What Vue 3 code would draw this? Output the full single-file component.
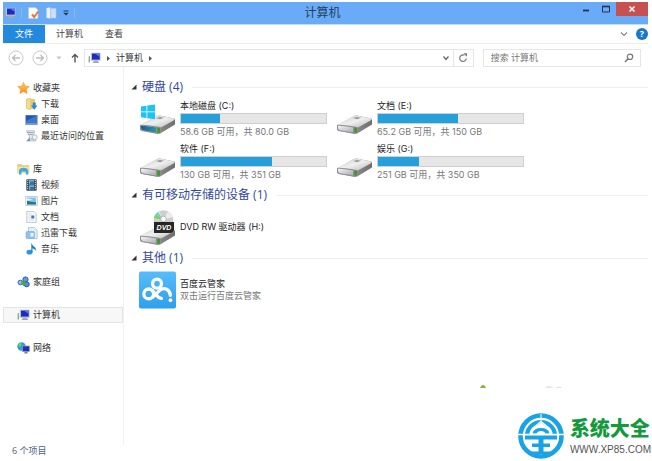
<script setup>
import { ref } from 'vue'

const query = ref('')

const groups = [
  {
    head: { icon: 'star', label: '收藏夹' },
    items: [
      { icon: 'download', label: '下载' },
      { icon: 'desktop', label: '桌面' },
      { icon: 'recent', label: '最近访问的位置' },
    ],
  },
  {
    head: { icon: 'library', label: '库' },
    items: [
      { icon: 'video', label: '视频' },
      { icon: 'picture', label: '图片' },
      { icon: 'document', label: '文档' },
      { icon: 'thunder', label: '迅雷下载' },
      { icon: 'music', label: '音乐' },
    ],
  },
  { head: { icon: 'homegroup', label: '家庭组' }, items: [] },
  { head: { icon: 'pc', label: '计算机', active: true }, items: [] },
  { head: { icon: 'network', label: '网络' }, items: [] },
]

const drives = [
  { name: '本地磁盘 (C:)', used: 27, info: '58.6 GB 可用，共 80.0 GB', icon: 'drive-win' },
  { name: '文档 (E:)', used: 55, info: '65.2 GB 可用，共 150 GB', icon: 'drive' },
  { name: '软件 (F:)', used: 63, info: '130 GB 可用，共 351 GB', icon: 'drive' },
  { name: '娱乐 (G:)', used: 28, info: '251 GB 可用，共 350 GB', icon: 'drive' },
]
</script>

<template>
  <div class="window">
    <svg class="sprite" aria-hidden="true">
      <defs>
        <linearGradient id="g-top" x1="0" y1="0" x2="1" y2="1">
          <stop offset="0" stop-color="#c9c9c9" />
          <stop offset=".5" stop-color="#efefef" />
          <stop offset="1" stop-color="#b5b5b5" />
        </linearGradient>
        <linearGradient id="g-side" x1="0" y1="0" x2="1" y2="0">
          <stop offset="0" stop-color="#a8a8a8" />
          <stop offset="1" stop-color="#6e6e6e" />
        </linearGradient>
        <linearGradient id="g-front" x1="0" y1="0" x2="1" y2="1">
          <stop offset="0" stop-color="#f4f4f8" />
          <stop offset="1" stop-color="#a9a9ae" />
        </linearGradient>
        <linearGradient id="g-blue" x1="0" y1="0" x2="1" y2="0">
          <stop offset="0" stop-color="#1d5c92" />
          <stop offset="1" stop-color="#2d94a8" />
        </linearGradient>
        <linearGradient id="g-cloud" x1="0" y1="0" x2="0" y2="1">
          <stop offset="0" stop-color="#54bdfb" />
          <stop offset="1" stop-color="#2f9fee" />
        </linearGradient>
        <linearGradient id="g-star" x1="0" y1="0" x2="0" y2="1">
          <stop offset="0" stop-color="#ffd05a" />
          <stop offset="1" stop-color="#f58a1f" />
        </linearGradient>
      </defs>
      <symbol id="drivebox" viewBox="0 0 37 20">
        <path d="M1 11 18 1.500Q20 .8 22 1.200L35 4Q36.500 4.500 36 6V10L22 18.500Q20 19.500 17 19L3 16.500Q1 16 1 14Z" fill="url(#g-side)" />
        <path d="M1 10.500 18 1.500Q20 .8 22 1.200L35 4Q36.500 4.700 35 5.800L22 13 3 11Z" fill="url(#g-top)" />
        <path d="M17 3.500 21 2.500 25 3.300 21 4.800Z" fill="#999" />
        <path d="M1 10.500Q3 9.500 21 12.500Q22.500 13 22 18.500Q20 19.500 17 19L3 16.500Q1 16 1 14Z" fill="#8f8f91" />
        <path d="M2 11.300Q5 10.800 17 13V18L4 15.700Q2 15 2 13.500Z" fill="url(#g-front)" />
        <path d="M18.300 13 21 13.400V18.300H18.300Z" fill="#3f982d" />
      </symbol>
      <symbol id="drive" viewBox="0 0 37 37">
        <use href="#drivebox" y="14" width="37" height="20" />
      </symbol>
      <symbol id="drive-win" viewBox="0 0 37 37">
        <use href="#drivebox" y="14" width="37" height="20" />
        <path d="M2 25.300Q5 24.800 17 27V32L4 29.700Q2 29 2 27.500Z" fill="url(#g-blue)" />
        <path d="M2 6 7.500 5.200V11H2ZM8.300 5.100 16 4V11H8.300ZM2 11.800H7.500V17.500L2 16.700ZM8.300 11.800H16V18.800L8.300 17.700Z" fill="#1cc3f7" />
      </symbol>
      <symbol id="cloud" viewBox="0 0 38 38">
        <rect width="38" height="38" rx="2" fill="url(#g-cloud)" />
        <g fill="none" stroke="#fff" stroke-width="3.400" stroke-linecap="round">
          <circle cx="18.500" cy="12.500" r="4.600" />
          <circle cx="10" cy="23" r="5" />
          <path d="M13.500 26.500Q17 24 20 20.500Q24 16 29 18.500Q32 20.500 32.200 24.500" />
          <path d="M13.500 19.500 19 25.500Q20.500 27.300 23 27.500" />
        </g>
        <circle cx="32.300" cy="29.500" r="1.900" fill="#fff" />
      </symbol>
      <symbol id="star" viewBox="0 0 12 12">
        <path d="M6 .3 7.700 4 11.800 4.500 8.800 7.400 9.600 11.600 6 9.600 2.300 11.600 3.100 7.400.2 4.500 4.300 4Z" fill="url(#g-star)" stroke="#f0932b" stroke-width=".5" />
      </symbol>
      <symbol id="download" viewBox="0 0 12 12">
        <path d="M1 1 5 .3V11.500L1 10.800Z" fill="#f3dc8a" stroke="#c9ac55" stroke-width=".5" />
        <path d="M5 1H9.500V11H5Z" fill="#e8cb6c" />
        <path d="M7.300 4.500H10.200V7.500H12L8.800 11.700 5.500 7.500H7.300Z" fill="#2b8bd8" />
      </symbol>
      <symbol id="desktop" viewBox="0 0 12 12">
        <rect x=".3" y="1.300" width="11.400" height="9.400" fill="#3c78d0" stroke="#6b86ad" stroke-width=".6" />
        <path d="M.6 1.600H11.400L.6 7Z" fill="#2457b4" />
        <rect x=".6" y="9.300" width="10.800" height="1.200" fill="#8fa7c5" />
      </symbol>
      <symbol id="recent" viewBox="0 0 12 12">
        <path d="M1 .8H9L8.200 6.500 10.500 11H3.500L3.800 6Z" fill="#e1e7ec" stroke="#9daab5" stroke-width=".6" />
        <path d="M1.500 2.500H8M3 4.500H7.500M5 9H10" stroke="#84919c" stroke-width=".7" />
        <circle cx="9.300" cy="7.300" r="2.400" fill="#eef5fa" stroke="#93a3b0" stroke-width=".6" />
        <path d="M.5 11.200 4.500 7.500V11.200Z" fill="#7397b8" />
      </symbol>
      <symbol id="library" viewBox="0 0 13 12">
        <path d="M.5 1.500H4.500L5.500 2.500H12V10H.5Z" fill="#e4cf79" stroke="#cfb765" stroke-width=".4" />
        <path d="M.5 3.800H12.300V10.200H.5Z" fill="#f4e5a3" />
        <path d="M2 11.500V7.500Q2.500 4.800 6.500 4.800T11.300 7.500V11.500H8.800V8.800H4.500V11.500Z" fill="#46a8df" />
      </symbol>
      <symbol id="video" viewBox="0 0 12 12">
        <rect x=".8" y=".2" width="10.400" height="11.600" rx=".8" fill="#464c54" />
        <path d="M3.500 1H8.500V5.600H3.500ZM3.500 6.300H8.500V11H3.500Z" fill="#62b4de" />
        <path d="M5 2.500H8.500V5.600H4ZM5 8H8.500V11H4Z" fill="#3a6f9c" />
        <path d="M2.100 1V11M9.900 1V11" stroke="#cbd0d5" stroke-width="1" stroke-dasharray="1 1" />
      </symbol>
      <symbol id="picture" viewBox="0 0 12 12">
        <rect x=".3" y="1.300" width="11.400" height="9.400" fill="#f4f6f8" stroke="#aab3bb" stroke-width=".6" />
        <rect x="1.500" y="2.500" width="9" height="7" fill="#7dc6ea" />
        <path d="M1.500 5.500 5 6.800 10.500 7.300V9.500H1.500Z" fill="#27748b" />
        <path d="M1.500 3.500Q5 3 7 5L1.500 5.700Z" fill="#e8f5fb" />
      </symbol>
      <symbol id="document" viewBox="0 0 12 12">
        <path d="M1.300.4H8.300L10.700 2.800V11.600H1.300Z" fill="#f7f9fa" stroke="#a8b2ba" stroke-width=".7" />
        <path d="M3 3H6M3 5H5M3 7H5M3 9H8" stroke="#c3cdd5" stroke-width=".7" />
        <rect x="5.800" y="4.500" width="3" height="3" fill="#387fae" />
      </symbol>
      <symbol id="thunder" viewBox="0 0 12 12">
        <path d="M3 .4H9L11.600 3V11.500H3Z" fill="#e0eefa" stroke="#9bb8d2" stroke-width=".7" />
        <rect x=".5" y="4.500" width="8.500" height="7" rx="1" fill="#8fc1ec" stroke="#6fa5d5" stroke-width=".5" />
        <path d="M5 6H8V9.500H5Z" fill="#edf6fd" />
      </symbol>
      <symbol id="music" viewBox="0 0 12 12">
        <ellipse cx="4" cy="9.200" rx="3" ry="2.400" fill="#2d96dd" />
        <path d="M6 .3Q7 3 9.500 4.200Q11 5.500 10 8Q9.500 5.600 7 5.200V9.200H5.800V.3Z" fill="#1f7dc6" />
      </symbol>
      <symbol id="homegroup" viewBox="0 0 13 12">
        <circle cx="8.500" cy="3.500" r="2.600" fill="#6697df" stroke="#2b59b5" stroke-width="1" />
        <circle cx="3.300" cy="6.500" r="2.300" fill="#8db9e8" stroke="#3b69bd" stroke-width="1" />
        <circle cx="9.700" cy="8.300" r="2.500" fill="#5f8fd8" stroke="#234fae" stroke-width="1" />
        <path d="M4.500 4.500 8 4.800 9 8 6.500 10 4.500 8Z" fill="#3daa4c" />
      </symbol>
      <symbol id="pc" viewBox="0 0 13 12">
        <path d="M.6 4.500 2 4V10.500H.6Z" fill="#86ad8d" />
        <rect x="2.800" y=".8" width="9.700" height="8" fill="#b9c0d0" />
        <rect x="4" y="1.600" width="7.700" height="6" fill="#1d2bc4" />
        <path d="M7 1.600H11.700V5Z" fill="#5c7eea" />
        <path d="M6 8.800H9.500L11.500 11H4.500Z" fill="#a4a9b1" />
      </symbol>
      <symbol id="network" viewBox="0 0 13 12">
        <circle cx="4.500" cy="4.500" r="4.200" fill="#2e9bd8" />
        <path d="M1.500 2Q4 0 5 2Q4 4.500 2 5.500ZM4 6.500 7 5.500 6 8.500Z" fill="#6cd06a" />
        <rect x="5.500" y="4" width="7" height="5.500" fill="#1f2fb8" stroke="#8fa2c8" stroke-width=".7" />
        <path d="M8 9.500H10L11 11.500H7Z" fill="#76829c" />
      </symbol>
    </svg>

    <header class="titlebar">
      <div class="quick">
        <svg class="ico"><use href="#pc" /></svg>
        <i class="sep"></i>
        <button type="button" aria-label="属性">
          <svg class="ico" viewBox="0 0 12 12">
            <path d="M1 .5H8L10.500 3V11.500H1Z" fill="#fbfbfb" stroke="#b9c2cc" stroke-width=".5" />
            <path d="M4.500 7.500 6.700 10 10.700 4.500" fill="none" stroke="#e8743a" stroke-width="2" />
          </svg>
        </button>
        <button type="button" aria-label="新建文件夹">
          <svg class="ico" viewBox="0 0 12 12">
            <path d="M1 1 5 .5V11.500L1 11Z" fill="#e9f2fb" />
            <path d="M5.500 1.500H10.500V11H5.500Z" fill="#cfe0f1" stroke="#b0c8e2" stroke-width=".5" />
          </svg>
        </button>
        <button type="button" aria-label="自定义快速访问工具栏">
          <svg class="mini" viewBox="0 0 6 6"><path d="M.5 1H5.500" stroke="#223a55" /><path d="M.3 2.700H5.700L3 5.500Z" fill="#223a55" /></svg>
        </button>
        <i class="sep"></i>
      </div>
      <h1>计算机</h1>
      <div class="controls">
        <button type="button" aria-label="最小化">
          <svg viewBox="0 0 10 10"><path d="M2 6.500H8" stroke="#1f344e" stroke-width="1.800" /></svg>
        </button>
        <button type="button" aria-label="最大化">
          <svg viewBox="0 0 10 10"><path d="M1.500 2.500H8.500V8H1.500Z" fill="none" stroke="#1f344e" /><path d="M1 2.500H9" stroke="#1f344e" stroke-width="1.600" /></svg>
        </button>
        <button type="button" class="close" aria-label="关闭">
          <svg viewBox="0 0 10 10"><path d="M2.500 2.500 7.500 7.500M7.500 2.500 2.500 7.500" stroke="#fff" stroke-width="1.500" /></svg>
        </button>
      </div>
    </header>

    <nav class="ribbon">
      <button type="button" class="file">文件</button>
      <button type="button" class="tab">计算机</button>
      <button type="button" class="tab">查看</button>
      <span class="grow"></span>
      <button type="button" aria-label="展开功能区">
        <svg class="chev" viewBox="0 0 8 8"><path d="M1 2.500 4 5.500 7 2.500" fill="none" stroke="#888" stroke-width="1.200" /></svg>
      </button>
      <button type="button" class="help" aria-label="帮助">?</button>
    </nav>

    <div class="addressbar">
      <div class="history">
        <button type="button" aria-label="返回">
          <svg class="round" viewBox="0 0 16 16"><circle cx="8" cy="8" r="7" fill="none" stroke="#c9c9c9" /><path d="M12 8H4.500M7.500 5 4.500 8 7.500 11" fill="none" stroke="#bdbdbd" stroke-width="1.300" /></svg>
        </button>
        <button type="button" aria-label="前进">
          <svg class="round" viewBox="0 0 16 16"><circle cx="8" cy="8" r="7" fill="none" stroke="#c9c9c9" /><path d="M4 8H11.500M8.500 5 11.500 8 8.500 11" fill="none" stroke="#bdbdbd" stroke-width="1.300" /></svg>
        </button>
        <button type="button" aria-label="最近位置">
          <svg class="mini" viewBox="0 0 6 6"><path d="M.5 1.500H5.500L3 4.500Z" fill="#c4c4c4" /></svg>
        </button>
        <button type="button" aria-label="向上">
          <svg class="up" viewBox="0 0 10 10"><path d="M5 9.500V1.500M2 4.500 5 1.500 8 4.500" fill="none" stroke="#555" stroke-width="1.400" /></svg>
        </button>
      </div>
      <div class="path">
        <svg class="ico"><use href="#pc" /></svg>
        <svg class="arrow" viewBox="0 0 5 7"><path d="M1 1 4 3.500 1 6Z" fill="#555" /></svg>
        <a href="#computer">计算机</a>
        <svg class="arrow" viewBox="0 0 5 7"><path d="M1 1 4 3.500 1 6Z" fill="#555" /></svg>
        <span class="grow"></span>
        <button type="button" aria-label="历史记录">
          <svg class="chev" viewBox="0 0 8 8"><path d="M1.500 2.500 4 5.500 6.500 2.500" fill="none" stroke="#666" stroke-width="1.300" /></svg>
        </button>
        <button type="button" class="refresh" aria-label="刷新">
          <svg class="up" viewBox="0 0 10 10"><path d="M8.300 5.500A3.300 3.300 0 1 1 6.500 2.200" fill="none" stroke="#777" stroke-width="1.200" /><path d="M5.500.3H9V3.800Z" fill="#777" /></svg>
        </button>
      </div>
      <label class="search">
        <input v-model="query" type="text" placeholder="搜索 计算机" aria-label="搜索 计算机" />
        <svg class="up" viewBox="0 0 10 10"><circle cx="6" cy="3.800" r="2.700" fill="none" stroke="#777" stroke-width="1.200" /><path d="M4 5.800 1 9" stroke="#777" stroke-width="1.500" /></svg>
      </label>
    </div>

    <div class="body">
      <aside>
        <ul v-for="g in groups" :key="g.head.label">
          <li :class="{ active: g.head.active }">
            <a href="#"><svg class="ico"><use :href="'#' + g.head.icon" /></svg>{{ g.head.label }}</a>
          </li>
          <li v-for="i in g.items" :key="i.label" class="child">
            <a href="#"><svg class="ico"><use :href="'#' + i.icon" /></svg>{{ i.label }}</a>
          </li>
        </ul>
      </aside>

      <main>
        <section>
          <h2><svg viewBox="0 0 6 6"><path d="M5.500.5V5.500H.5Z" fill="#333" /></svg>硬盘 (4)</h2>
          <div class="drives">
            <article v-for="d in drives" :key="d.name" class="item">
              <svg class="big"><use :href="'#' + d.icon" /></svg>
              <div class="text">
                <h3>{{ d.name }}</h3>
                <div class="meter"><div class="fill" :style="{ width: d.used + '%' }"></div></div>
                <p>{{ d.info }}</p>
              </div>
            </article>
          </div>
        </section>
        <section>
          <h2><svg viewBox="0 0 6 6"><path d="M5.500.5V5.500H.5Z" fill="#333" /></svg>有可移动存储的设备 (1)</h2>
          <article class="item single">
            <svg class="big" viewBox="0 0 37 37">
              <use href="#drivebox" y="17" width="37" height="20" />
              <circle cx="24.500" cy="11.500" r="9.800" fill="#cfcfcf" />
              <path d="M24.500 11.500 16 6.500 20 2.700Z" fill="#e9e9e9" />
              <path d="M24.500 11.500 14.900 9.500Q15.500 7 17 5.300Z" fill="#7bd558" />
              <path d="M24.500 11.500 17 5.300 19 3.500Z" fill="#62d0e8" />
              <path d="M24.500 11.500 29 2.700 34 8Z" fill="#eee" />
              <circle cx="24.500" cy="10.500" r="2.800" fill="#fff" stroke="#aaa" stroke-width=".8" />
              <path d="M15 13.500H35V21.500Q34.500 24.500 31 24.500H15Z" fill="#262626" />
              <text class="disc" x="25" y="21.500" text-anchor="middle">DVD</text>
            </svg>
            <h3>DVD RW 驱动器 (H:)</h3>
          </article>
        </section>
        <section>
          <h2><svg viewBox="0 0 6 6"><path d="M5.500.5V5.500H.5Z" fill="#333" /></svg>其他 (1)</h2>
          <article class="item single">
            <svg class="big"><use href="#cloud" /></svg>
            <div class="text">
              <h3>百度云管家</h3>
              <p>双击运行百度云管家</p>
            </div>
          </article>
        </section>
      </main>
    </div>

    <footer>6 个项目</footer>

    <svg class="specks" viewBox="0 0 90 4" aria-hidden="true">
      <path d="M1 4Q2 1 4 1T7 4Z" fill="#86b82c" />
      <path d="M66 4Q67 2 70 2T74 4ZM77 4Q78 2.500 80 2.500T83 4Z" fill="#e3e3e3" />
    </svg>
    <div class="brand">
      <svg viewBox="0 0 46 46" aria-hidden="true">
        <circle cx="23" cy="23" r="20.500" fill="none" stroke="#1aa3e4" stroke-width="4.600" />
        <path d="M23 7A16 16 0 0 0 7 21H12.500Q14 14 19 12.500L23 9.500 27 12.500Q32 14 33.500 21H39A16 16 0 0 0 23 7Z" fill="#1aa3e4" />
        <path d="M23 8.500 29 13.500Q33 16 34 21M23 8.500 17 13.500Q13 16 12 21" fill="none" stroke="#fff" stroke-width="1.500" />
        <path d="M14.500 20.500Q15.500 15 23 15T31.500 20.500H27.500Q26.500 18 23 18T18.500 20.500Z" fill="#1aa3e4" />
        <path d="M0 21.500H46" stroke="#fff" stroke-width="1.500" />
        <path d="M7 22.500H39V26.500H25.500V30.500H32V34H25.500V38.500H34L30 41H16L12 38.500H20.500V34H14V30.500H20.500V26.500H7Z" fill="#1aa3e4" />
        <path d="M23 1V8" stroke="#fff" stroke-width="1" />
      </svg>
      <div>
        <strong>系统大全</strong>
        <span>WWW.XP85.COM</span>
      </div>
    </div>
  </div>
</template>

<style>
body { background: #fff; }
</style>

<style scoped>
.window {
  position: relative;
  box-sizing: border-box;
  min-height: 100vh;
  padding: 2px 4px 0 3px;
  display: flex;
  flex-direction: column;
  font-family: "Open Sans", "Noto Sans CJK SC", sans-serif;
  font-size: 9px;
  line-height: 12px;
  color: #333;
}
.sprite { position: absolute; width: 0; height: 0; }
svg { display: block; flex: none; }
button { border: 0; margin: 0; padding: 0; background: none; font: inherit; color: inherit; display: flex; align-items: center; justify-content: center; }
a { color: inherit; text-decoration: none; }
h1, h2, h3, p, ul { margin: 0; padding: 0; font-weight: normal; font-size: inherit; }
ul { list-style: none; }
.ico { width: 13px; height: 12px; }
.mini { width: 6px; height: 6px; }
.chev { width: 8px; height: 8px; }
.up { width: 10px; height: 10px; }
.grow { flex: 1; }

.titlebar {
  display: grid;
  grid-template-columns: 1fr auto 1fr;
  height: 22px;
  background: #6aabf7;
  border-bottom: 1px solid #c6def8;
}
.quick { display: flex; align-items: center; gap: 5px; }
.sep { width: 1px; height: 10px; background: #8fb5dd; }
.titlebar h1 { padding-right: 6px; font-size: 12px; line-height: 22px; color: #23415f; }
.controls { display: flex; justify-content: flex-end; align-items: flex-start; }
.controls button { width: 20px; height: 14px; }
.controls svg { width: 10px; height: 10px; }
.controls .close { width: 32px; background: #c75050; }

.ribbon { display: flex; height: 18px; border-bottom: 1px solid #ececec; color: #444; }
.ribbon .file { width: 42px; background: #2389dd; color: #fff; }
.ribbon .tab { padding: 0 11px; }
.ribbon .help {
  width: 12px; height: 12px; align-self: center; margin-left: 8px;
  border-radius: 50%; background: #1877cc; color: #fff; font-weight: bold;
}

.addressbar { display: flex; padding: 5px 7px 0 5px; }
.history { display: flex; align-items: center; width: 76px; gap: 8px; }
.round { width: 16px; height: 16px; }
.path, .search { box-sizing: border-box; height: 18px; border: 1px solid #e6e6e6; display: flex; align-items: center; }
.path { flex: 1; padding-left: 3px; gap: 5px; }
.path .arrow { width: 5px; height: 7px; }
.path .refresh { width: 20px; align-self: stretch; border-left: 1px solid #e6e6e6; margin-left: -2px; }
.search { width: 25%; margin-left: 9px; padding: 0 6px 0 7px; }
.search input { flex: 1; min-width: 0; border: 0; padding: 0; background: none; outline: 0; font: inherit; color: #666; }
.search input::placeholder { color: #777; opacity: 1; }

.body { display: flex; flex: 1; }
aside { width: 120px; border-right: 1px solid #f1f1f1; padding-top: 13px; display: flex; flex-direction: column; gap: 17px; }
aside li { box-sizing: border-box; height: 16px; padding-left: 14px; }
aside li.child { padding-left: 22px; }
aside a { display: flex; align-items: center; gap: 3px; height: 16px; }
aside li.active { background: #f7f7f7; outline: 1px solid #e4e4e4; outline-offset: -1px; }

main { flex: 1; padding: 11px 0 0 7px; }
h2 { display: flex; align-items: center; gap: 5px; font-size: 12px; line-height: 18px; color: #33489c; }
h2 svg { width: 6px; height: 6px; }
h2::after { content: ""; flex: 1; height: 1px; margin-left: 4px; background: #eee; }
.drives { display: grid; grid-template-columns: repeat(auto-fill, 197px); row-gap: 5px; padding: 4px 0 5px 8px; }
.item { display: flex; align-items: center; gap: 4px; font-family: Inter, "Noto Sans CJK SC", sans-serif; }
.single { padding: 4px 0 3px 8px; }
.big { width: 37px; height: 38px; }
.disc { font: italic bold 7px "Liberation Sans", sans-serif; fill: #fff; }
.meter { box-sizing: border-box; width: 147px; height: 11px; margin: 1px 0 2px; border: 1px solid #cfcfcf; background: #e6e6e6; }
.fill { height: 100%; background: #26a0da; }
h3 { color: #222; }
.item p { color: #777; }

footer { padding: 0 9px 4px; color: #4d5f80; }

.specks { position: absolute; right: 83px; bottom: 73px; width: 90px; height: 4px; }
.brand { position: absolute; right: 1px; bottom: 2px; display: flex; align-items: center; gap: 6px; }
.brand > svg { width: 46px; height: 46px; }
.brand strong { display: block; font-size: 20px; line-height: 28px; color: #139a3d; font-family: "Noto Sans CJK SC", sans-serif; font-weight: 900; }
.brand span { display: block; font-family: "Liberation Sans", sans-serif; font-size: 10px; line-height: 16px; color: #555; }
</style>
